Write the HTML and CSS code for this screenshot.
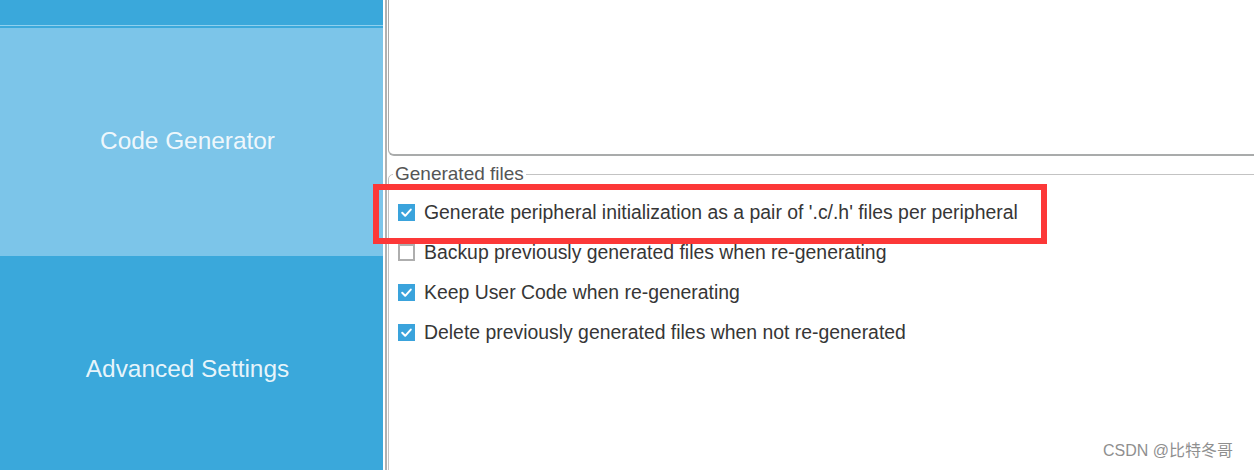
FILE: index.html
```html
<!DOCTYPE html>
<html lang="en">
<head>
<meta charset="utf-8">
<title>Project Manager - Code Generator</title>
<link rel="stylesheet" href="styles.css">
</head>
<body>
<div class="app">
  <nav class="sidebar">
    <div class="nav-item nav-prev"></div>
    <div class="nav-sep"></div>
    <div class="nav-item nav-active">Code Generator</div>
    <div class="nav-item nav-next">Advanced Settings</div>
  </nav>
  <main class="main">
    <div class="top-box"></div>
    <fieldset class="group">
      <legend class="group-title">Generated files</legend>
      <label class="opt">
        <span class="cb cb-on"><svg viewBox="0 0 17 17" width="17" height="17"><path d="M4.2 8.8 L7.2 11.8 L12.8 5.6" fill="none" stroke="#fff" stroke-width="2" stroke-linecap="round" stroke-linejoin="round"/></svg></span>
        <span class="opt-text">Generate peripheral initialization as a pair of '.c/.h' files per peripheral</span>
      </label>
      <label class="opt">
        <span class="cb cb-off"></span>
        <span class="opt-text">Backup previously generated files when re-generating</span>
      </label>
      <label class="opt">
        <span class="cb cb-on"><svg viewBox="0 0 17 17" width="17" height="17"><path d="M4.2 8.8 L7.2 11.8 L12.8 5.6" fill="none" stroke="#fff" stroke-width="2" stroke-linecap="round" stroke-linejoin="round"/></svg></span>
        <span class="opt-text">Keep User Code when re-generating</span>
      </label>
      <label class="opt">
        <span class="cb cb-on"><svg viewBox="0 0 17 17" width="17" height="17"><path d="M4.2 8.8 L7.2 11.8 L12.8 5.6" fill="none" stroke="#fff" stroke-width="2" stroke-linecap="round" stroke-linejoin="round"/></svg></span>
        <span class="opt-text">Delete previously generated files when not re-generated</span>
      </label>
    </fieldset>
  </main>
</div>
<div class="highlight"></div>
<div class="watermark">CSDN @比特冬哥</div>
</body>
</html>
```
FILE: styles.css
```css
html, body {
  margin: 0;
  padding: 0;
}
body {
  width: 1254px;
  height: 470px;
  overflow: hidden;
  position: relative;
  background: #ffffff;
  font-family: "Liberation Sans", Arial, sans-serif;
}
.app {
  display: flex;
  height: 470px;
  overflow: hidden;
}
.sidebar {
  width: 383px;
  flex-shrink: 0;
  display: flex;
  flex-direction: column;
  background: #3aa8db;
}
.nav-item {
  display: flex;
  align-items: center;
  justify-content: center;
  font-size: 24.4px;
  color: rgba(255, 255, 255, 0.9);
  flex-shrink: 0;
  padding-right: 8px;
}
.nav-prev {
  height: 25px;
  background: #3aa8db;
}
.nav-sep {
  height: 1px;
  background: #8fd0ee;
  flex-shrink: 0;
}
.nav-active {
  height: 226px;
  border-top: 2px solid #3ba9dc;
  background: #7cc5e9;
  padding-bottom: 2px;
}
.nav-next {
  height: 226px;
  background: #3aa8db;
}
.main {
  flex: 1;
  margin-left: 2px;
  border-left: 2px solid #b1b1b1;
  min-width: 0;
}
.top-box {
  height: 164px;
  margin-top: -10px;
  margin-left: 1px;
  margin-right: -20px;
  border-left: 1px solid #a9a9a9;
  border-bottom: 2px solid #a9abab;
  border-bottom-left-radius: 6px;
}
.group {
  margin: 7px -20px 0 1px;
  padding: 7px 0 0 9px;
  border: 1px solid #c3c3c3;
  border-radius: 5px;
  height: 400px;
  min-width: 0;
}
.group-title {
  margin-left: -5px;
  padding: 0 2px;
  font-size: 19px;
  line-height: 22px;
  color: #555555;
}
.opt {
  display: flex;
  align-items: center;
  height: 40px;
  font-size: 19.4px;
  color: #363636;
}
.opt-text {
  white-space: nowrap;
}
.cb {
  width: 17px;
  height: 17px;
  margin-right: 9px;
  box-sizing: border-box;
  flex-shrink: 0;
  display: block;
}
.cb svg {
  display: block;
}
.cb-on {
  background: #3aa3dc;
}
.cb-off {
  background: #ffffff;
  border: 2px solid #aeaeae;
}
.highlight {
  position: absolute;
  left: 373px;
  top: 184px;
  width: 674px;
  height: 60px;
  box-sizing: border-box;
  border: 6px solid #fc3838;
}
.watermark {
  position: absolute;
  left: 1103px;
  top: 441px;
  font-size: 16px;
  line-height: 20px;
  color: #8f8f8f;
  font-family: "Liberation Sans", "Noto Sans CJK SC", sans-serif;
  white-space: nowrap;
}
```
